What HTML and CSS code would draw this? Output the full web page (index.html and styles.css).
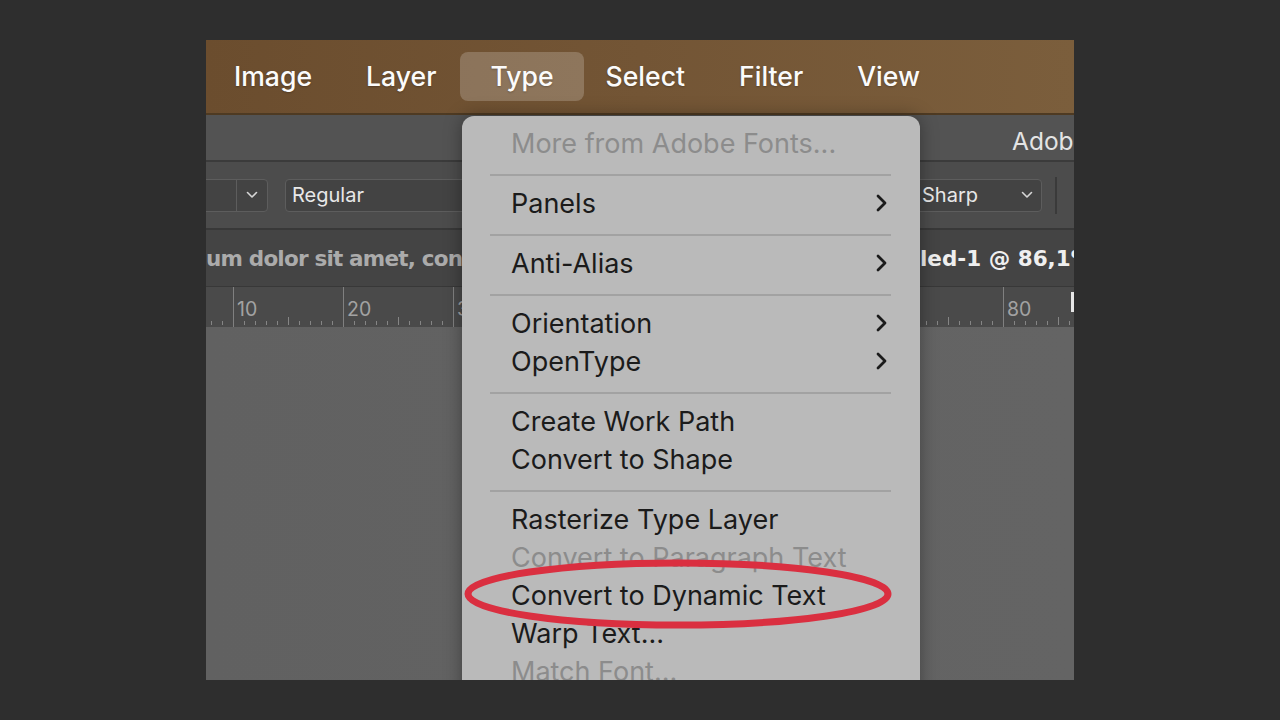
FILE: index.html
```html
<!DOCTYPE html>
<html lang="en">
<head>
<meta charset="utf-8">
<title>Type menu</title>
<link rel="stylesheet" href="styles.css">
</head>
<body>
<div class="window">
  <nav class="menubar">
    <span class="mb-item">Image</span>
    <span class="mb-item">Layer</span>
    <span class="mb-item mb-active">Type</span>
    <span class="mb-item">Select</span>
    <span class="mb-item">Filter</span>
    <span class="mb-item">View</span>
  </nav>
  <div class="titlebar"><span class="app-title">Adobe Photoshop 2022</span></div>
  <div class="options">
    <div class="dd dd-size">
      <span class="dd-val"></span>
      <span class="dd-btn"><svg class="chev" viewBox="0 0 12 8" width="12" height="8"><path d="M1.5 1.5 L6 6 L10.5 1.5"/></svg></span>
    </div>
    <div class="dd dd-style"><span class="dd-text">Regular</span></div>
    <div class="opt-spacer"></div>
    <div class="dd dd-aa">
      <span class="dd-text">Sharp</span>
      <svg class="chev" viewBox="0 0 12 8" width="12" height="8"><path d="M1.5 1.5 L6 6 L10.5 1.5"/></svg>
    </div>
    <div class="vsep"></div>
  </div>
  <div class="tabs">
    <div class="tab tab-a">um dolor sit amet, con</div>
    <div class="tab tab-b">led-1 @ 86,1% (RGB/8)</div>
  </div>
  <div class="ruler">
    <div class="r-lead"></div>
    <div class="r-cell">10</div>
    <div class="r-cell">20</div>
    <div class="r-cell">30</div>
    <div class="r-cell">40</div>
    <div class="r-cell">50</div>
    <div class="r-cell">60</div>
    <div class="r-cell">70</div>
    <div class="r-cell">80</div>
    <span class="r-marker"></span>
  </div>
  <div class="canvas"></div>

  <div class="dropdown">
    <div class="item disabled"><span>More from Adobe Fonts...</span></div>
    <div class="sep"></div>
    <div class="item"><span>Panels</span><svg class="sub" viewBox="0 0 14 20" width="14" height="20"><path d="M4 3 L11 10 L4 17"/></svg></div>
    <div class="sep"></div>
    <div class="item"><span>Anti-Alias</span><svg class="sub" viewBox="0 0 14 20" width="14" height="20"><path d="M4 3 L11 10 L4 17"/></svg></div>
    <div class="sep"></div>
    <div class="item"><span>Orientation</span><svg class="sub" viewBox="0 0 14 20" width="14" height="20"><path d="M4 3 L11 10 L4 17"/></svg></div>
    <div class="item"><span>OpenType</span><svg class="sub" viewBox="0 0 14 20" width="14" height="20"><path d="M4 3 L11 10 L4 17"/></svg></div>
    <div class="sep"></div>
    <div class="item"><span>Create Work Path</span></div>
    <div class="item"><span>Convert to Shape</span></div>
    <div class="sep"></div>
    <div class="item"><span>Rasterize Type Layer</span></div>
    <div class="item disabled"><span>Convert to Paragraph Text</span></div>
    <div class="item"><span>Convert to Dynamic Text</span></div>
    <div class="item"><span>Warp Text...</span></div>
    <div class="item disabled"><span>Match Font...</span></div>
  </div>

  <svg class="annot" viewBox="0 0 428 70" width="428" height="70">
    <ellipse cx="214" cy="35" rx="210" ry="31"/>
  </svg>
</div>
</body>
</html>
```

FILE: styles.css
```css
* { box-sizing: border-box; }

html, body {
  margin: 0;
  padding: 0;
  background: #2e2e2e;
  width: 1280px;
  height: 720px;
  overflow: hidden;
}

body { padding-top: 40px; padding-left: 206px; }

.window {
  position: relative;
  width: 868px;
  height: 640px;
  overflow: hidden;
  display: flex;
  flex-direction: column;
  background: #636363;
  font-family: "Inter", "Noto Sans", sans-serif;
}

/* ---------- menu bar ---------- */
.menubar {
  flex: 0 0 75px;
  display: flex;
  align-items: center;
  padding-left: 1px;
  padding-bottom: 1px;
  background: linear-gradient(to right, #6b4d2e 0%, #735535 50%, #7b5e3c 100%);
  border-bottom: 2px solid #4e3a22;
}

.mb-item {
  color: #fbfbfb;
  font-size: 26.6px;
  font-weight: 500;
  padding: 0 27px;
  line-height: 49px;
  text-shadow: 0 1px 2px rgba(0,0,0,0.25);
}

.mb-active {
  background: rgba(255, 255, 255, 0.2);
  border-radius: 8px;
  padding: 0 30px 0 31px;
  margin: 0 -5px 0 -4px;
}

/* ---------- title bar ---------- */
.titlebar {
  flex: 0 0 47px;
  background: #535353;
  border-bottom: 2px solid #3b3b3b;
  display: flex;
  align-items: center;
  padding-left: 806px;
  padding-top: 7px;
  white-space: nowrap;
  overflow: hidden;
}

.app-title {
  color: #e4e4e4;
  font-size: 24.5px;
}

/* ---------- options bar ---------- */
.options {
  flex: 0 0 68px;
  background: #4c4c4c;
  border-bottom: 2px solid #383838;
  display: flex;
  align-items: center;
  padding-right: 17px;
}

.dd {
  height: 33px;
  background: #434343;
  border: 1.5px solid #5d5d5d;
  border-radius: 4px;
  display: flex;
  align-items: center;
  color: #e8e8e8;
  font-size: 20px;
  flex-shrink: 0;
}

.dd-size {
  width: 92px;
  margin-left: -30px;
}

.dd-val { flex: 1; }

.dd-btn {
  width: 31px;
  height: 100%;
  border-left: 1.5px solid #5d5d5d;
  display: flex;
  align-items: center;
  justify-content: center;
}

.chev path {
  fill: none;
  stroke: #d6d6d6;
  stroke-width: 1.6;
  stroke-linecap: round;
  stroke-linejoin: round;
}

.dd-style {
  width: 220px;
  margin-left: 17px;
  padding-left: 6px;
}

.opt-spacer { flex: 1; }

.dd-aa {
  width: 132px;
  padding: 0 8px 0 11px;
  justify-content: space-between;
}

.vsep {
  width: 2px;
  height: 37px;
  margin-left: 13px;
  background: #3a3a3a;
  flex-shrink: 0;
}

/* ---------- document tabs ---------- */
.tabs {
  flex: 0 0 57px;
  background: #444444;
  border-bottom: 1px solid #383838;
  display: flex;
  align-items: center;
  white-space: nowrap;
  overflow: hidden;
  font-family: "DejaVu Sans", "Noto Sans", sans-serif;
  font-weight: bold;
  font-size: 21.5px;
}

.tab { flex-shrink: 0; }

.tab-a {
  width: 714px;
  overflow: hidden;
  color: #ababab;
  letter-spacing: -0.8px;
}

.tab-b {
  color: #efefef;
}

/* ---------- ruler ---------- */
.ruler {
  position: relative;
  flex: 0 0 40px;
  background: #4a4a4a;
  display: flex;
  overflow: hidden;
  color: #a2a2a2;
  font-size: 19.5px;
}

.r-lead {
  flex: 0 0 27px;
  background: repeating-linear-gradient(to right, #858585 0 1px, transparent 1px 11px) 5px calc(100% - 2px) / 100% 4px no-repeat;
}

.r-cell {
  flex: 0 0 110px;
  border-left: 1px solid #808080;
  padding: 11px 0 0 3px;
  line-height: 22px;
  background:
    linear-gradient(#858585, #858585) 54px calc(100% - 2px) / 1px 8px no-repeat,
    repeating-linear-gradient(to right, transparent 0 10px, #858585 10px 11px) 0 calc(100% - 2px) / 100% 4px no-repeat;
}

.r-marker {
  position: absolute;
  right: 0;
  top: 5px;
  width: 3px;
  height: 20px;
  background: #e6e6e6;
}

/* ---------- canvas ---------- */
.canvas {
  flex: 1;
  background: linear-gradient(to right, #616161, #646464);
}

/* ---------- dropdown menu ---------- */
.dropdown {
  position: absolute;
  left: 256px;
  top: 76px;
  width: 458px;
  bottom: -40px;
  background: #bababa;
  border-radius: 12px;
  box-shadow: 0 0 18px rgba(0, 0, 0, 0.35);
  padding-top: 8px;
  display: flex;
  flex-direction: column;
}

.item {
  height: 38px;
  flex-shrink: 0;
  display: flex;
  align-items: center;
  justify-content: space-between;
  padding: 0 32px 0 49px;
  color: #1b1b1b;
  font-size: 27px;
  white-space: nowrap;
}

.item.disabled { color: #8c8c8c; }

.sub path {
  fill: none;
  stroke: #1b1b1b;
  stroke-width: 2.8;
  stroke-linecap: round;
  stroke-linejoin: round;
}

.sep {
  flex-shrink: 0;
  height: 22px;
  margin: 0 29px 0 28px;
  padding-top: 12px;
}

.sep::before {
  content: "";
  display: block;
  border-top: 2px solid #a2a2a2;
}

/* ---------- annotation ---------- */
.annot {
  position: absolute;
  left: 258px;
  top: 519px;
  overflow: visible;
}

.annot ellipse {
  fill: none;
  stroke: #da2f40;
  stroke-width: 7;
}
```
